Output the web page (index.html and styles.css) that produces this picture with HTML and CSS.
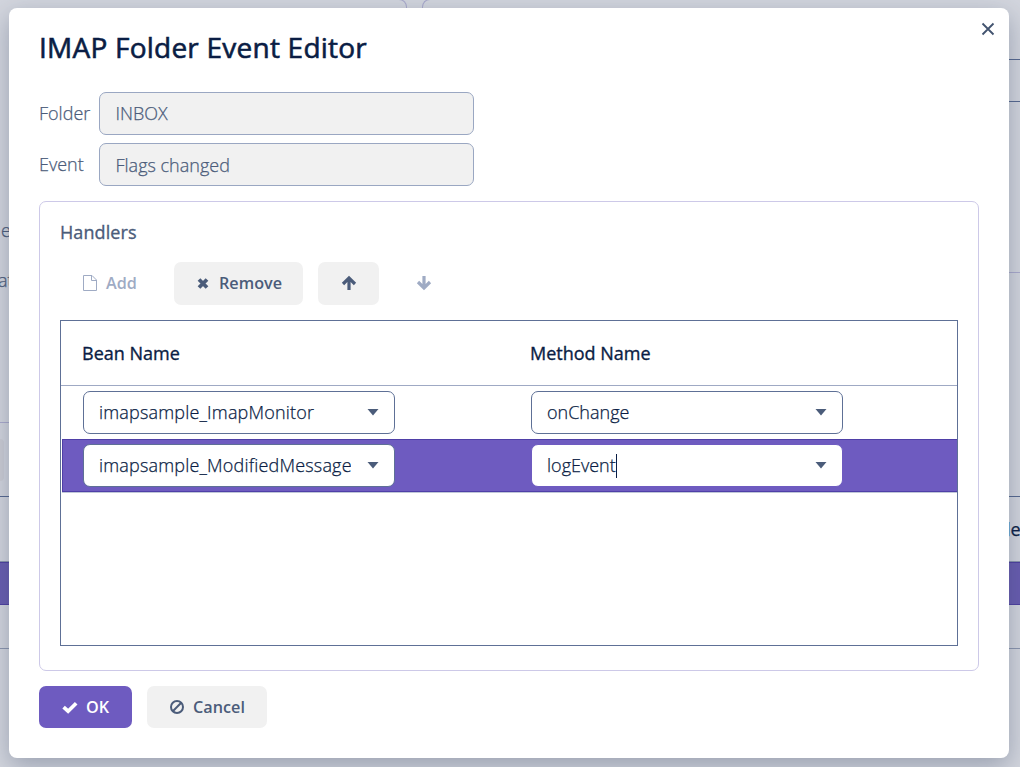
FILE: index.html
```html
<!DOCTYPE html>
<html lang="en">
<head>
<meta charset="utf-8">
<title>IMAP Folder Event Editor</title>
<link rel="stylesheet" href="styles.css">
</head>
<body>
<div class="page">
  <div class="page-top"><div class="pane pane-left"></div><div class="pane pane-right"></div></div>
  <div class="page-body">
    <div class="edge edge-left">
      <div class="edge-form"><span class="edge-label">e</span><span class="edge-label edge-label-wide">at</span></div>
      <div class="edge-tools"><div class="edge-button"></div></div>
      <div class="edge-head"></div>
      <div class="edge-selected"></div>
      <div class="edge-row"></div>
    </div>
    <div class="edge edge-right">
      <div class="edge-field"></div>
      <div class="edge-form-right"></div>
      <div class="edge-gap"></div>
      <div class="edge-head"><span>le</span></div>
      <div class="edge-selected"></div>
      <div class="edge-row"></div>
    </div>
  </div>
</div>
<div class="dialog" role="dialog" aria-label="IMAP Folder Event Editor">
  <button class="close" aria-label="Close"><svg width="14" height="14" viewBox="0 0 14 14"><path d="M1.5 1.5 12.5 12.5M12.5 1.5 1.5 12.5" fill="none" stroke="currentColor" stroke-width="1.8"/></svg></button>
  <h1 class="title">IMAP Folder Event Editor</h1>
  <div class="form">
    <span class="label">Folder</span><div class="field first">INBOX</div>
    <span class="label">Event</span><div class="field">Flags changed</div>
  </div>
  <section class="group">
    <h2 class="group-title">Handlers</h2>
    <div class="toolbar">
      <button class="btn add" disabled><svg width="16" height="16" viewBox="0 0 16 16"><path d="M1.5.5H10L14.5 5V15.5H1.5ZM9.5.5V5.5H14.5" fill="none" stroke="currentColor"/></svg><span>Add</span></button>
      <button class="btn remove"><svg width="16" height="16" viewBox="0 0 16 16"><path d="M4 4.5 12 12.5M12 4.5 4 12.5" fill="none" stroke="currentColor" stroke-width="3.8"/></svg><span>Remove</span></button>
      <button class="btn arrow" aria-label="Move up"><svg width="16" height="16" viewBox="0 0 16 16"><path d="M2 9 8 3 14 9M8 3.5V15" fill="none" stroke="currentColor" stroke-width="3.2"/></svg></button>
      <button class="btn arrow down" aria-label="Move down" disabled><svg width="16" height="16" viewBox="0 0 16 16"><path d="M2 7 8 13 14 7M8 12.5V1" fill="none" stroke="currentColor" stroke-width="3.2"/></svg></button>
    </div>
    <div class="table">
      <div class="row head"><span>Bean Name</span><span>Method Name</span></div>
      <div class="row">
        <div class="combo"><span class="value">imapsample_ImapMonitor</span><svg class="caret" width="12" height="7" viewBox="0 0 12 7"><path d="M.5 0H11.5L6 6.5Z"/></svg></div>
        <div class="combo"><span>onChange</span><svg class="caret" width="12" height="7" viewBox="0 0 12 7"><path d="M.5 0H11.5L6 6.5Z"/></svg></div>
      </div>
      <div class="row selected">
        <div class="combo"><span class="value">imapsample_ModifiedMessage</span><svg class="caret" width="12" height="7" viewBox="0 0 12 7"><path d="M.5 0H11.5L6 6.5Z"/></svg></div>
        <div class="combo focused"><span>logEvent</span><i class="cursor"></i><svg class="caret" width="12" height="7" viewBox="0 0 12 7"><path d="M.5 0H11.5L6 6.5Z"/></svg></div>
      </div>
    </div>
  </section>
  <div class="actions">
    <button class="btn ok"><svg width="16" height="16" viewBox="0 0 16 16"><path d="M1.6 8.1 6.1 12.2 14.2 4.2" fill="none" stroke="currentColor" stroke-width="3.7"/></svg><span>OK</span></button>
    <button class="btn cancel"><svg width="16" height="16" viewBox="0 0 16 16"><g fill="none" stroke="currentColor" stroke-width="2"><circle cx="8" cy="8" r="6"/><path d="M3.8 12.2 12.2 3.8"/></g></svg><span>Cancel</span></button>
  </div>
</div>
</body>
</html>
```
FILE: styles.css
```css
* { box-sizing: border-box; }
html, body { height: 100%; }
body {
  margin: 0;
  overflow: hidden;
  background: #d3d6de;
  color: #0a1d44;
  font: 300 18px/24px "Open Sans", sans-serif;
  -webkit-text-stroke: .25px currentColor;
}
.page { height: 767px; display: flex; flex-direction: column; overflow: hidden; }
.page-top { display: flex; gap: 15px; height: 8px; }
.pane { height: 20px; margin-top: -1px; border: 1px solid #aaaacc; }
.pane-left { width: 407px; border-radius: 0 8px 0 0; border-left: 0; }
.pane-right { flex: 1; border-radius: 8px 0 0 0; border-right: 0; }
.page-body { flex: 1; display: flex; justify-content: space-between; }
.edge { overflow: hidden; background: #d3d6de; }
.edge-left { width: 9px; }
.edge-right { width: 11px; }
.edge-form {
  height: 415px;
  padding-top: 210px;
  border-bottom: 1px solid #aaaacc;
  display: flex;
  flex-direction: column;
  gap: 26px;
  color: #4b5c7a;
}
.edge-label { margin-left: 1px; }
.edge-label-wide { margin-left: -2px; }
.edge-tools { height: 73px; padding-top: 16px; }
.edge-button { width: 4px; height: 42px; background: #cdced5; border-radius: 0 7px 7px 0; }
.edge-head {
  height: 66px;
  padding: 20px 0 0 1px;
  border-top: 1px solid #56688f;
  border-bottom: 1px solid #8c96ae;
  font-weight: 500;
}
.edge-head span { margin-left: -4px; }
.edge-selected { height: 43px; background: #685cb0; border: solid #4d3fa0; border-width: 1px 0; }
.edge-row { height: 44px; border-bottom: 1px solid #8c96ae; }
.edge-field { height: 43px; margin-top: 51px; border: solid #56688f; border-width: 1px 0; }
.edge-form-right { height: 171px; border-bottom: 1px solid #aaaacc; }
.edge-gap { height: 223px; }

.dialog {
  position: absolute;
  left: 9px;
  top: 8px;
  width: 1000px;
  height: 750px;
  padding: 21px 30px 30px;
  border-radius: 8px;
  background: #fff;
  box-shadow: 0 8px 26px rgba(50, 65, 95, .36);
}
.close {
  position: absolute;
  top: 14px;
  right: 14px;
  padding: 0;
  border: 0;
  background: none;
  color: #42536f;
  line-height: 0;
}
.title {
  margin: 0;
  font-size: 28px;
  line-height: 36px;
  font-weight: 500;
  letter-spacing: .23px;
  -webkit-text-stroke: .6px currentColor;
}
.form {
  margin-top: 27px;
  display: grid;
  grid-template-columns: 52px 375px;
  column-gap: 8px;
  row-gap: 8px;
  align-items: center;
  color: #4b5c7a;
}
.label { padding-bottom: 2px; }
.field { height: 43px; padding: 9px 15.5px; border: 1px solid #9aa7c2; border-radius: 7px; background: #f1f1f1; }
.first { padding-top: 8px; }
.group {
  height: 470px;
  margin-top: 15px;
  padding: 18px 20px 24px;
  border: 1px solid #cdc9e8;
  border-radius: 7px;
}
.group-title {
  margin: 0;
  color: #4b5c7a;
  font-size: 18px;
  line-height: 24px;
  font-weight: 500;
  letter-spacing: .1px;
  -webkit-text-stroke: .35px currentColor;
}
.toolbar { display: flex; gap: 15px; margin-top: 18px; }
.btn {
  display: flex;
  align-items: center;
  justify-content: center;
  gap: 8px;
  height: 43px;
  padding: 0;
  border: 0;
  border-radius: 7px;
  background: #f1f1f1;
  color: #4b5c7a;
  font: 600 16.2px/24px "Open Sans", sans-serif;
  -webkit-text-stroke: 0;
}
.toolbar .btn { padding: 0 0 1px; }
.btn:disabled { background: none; color: #9fabc4; }
.add { width: 99px; }
.remove { width: 129px; }
.arrow { width: 61px; }
.toolbar .down { padding-right: 2px; }
.table { height: 326px; margin-top: 15px; border: 1px solid #5e7096; }
.row {
  display: grid;
  grid-template-columns: 312px 312px;
  column-gap: 136px;
  align-items: center;
  height: 53px;
  padding-left: 22px;
}
.head {
  height: 65px;
  padding-left: 21px;
  border-bottom: 1px solid #9fa9c4;
  font-weight: 500;
  -webkit-text-stroke: .35px currentColor;
}
.selected {
  height: 53px;
  margin-left: 1px;
  padding-left: 20px;
  background: #6e5bc0;
  border: solid #4f3fa7;
  border-width: 1px 0 1px 1px;
  box-shadow: 0 1px #c0c7d8;
}
.combo {
  display: flex;
  align-items: center;
  height: 43px;
  padding: 0 15px;
  border: 1px solid #5e7096;
  border-radius: 7px;
  background: #fff;
}
.combo span { padding-bottom: 2px; }
.value { width: 252px; overflow: hidden; white-space: nowrap; letter-spacing: .18px; }
.focused { border-color: #6e5bc0; }
.caret { margin-left: auto; fill: #4b5c7a; }
.cursor { width: 1px; height: 24px; background: #0a1d44; }
.actions { display: flex; gap: 15px; margin-top: 15px; }
.actions .btn { height: 42px; }
.actions .ok { width: 93px; background: #6e5bc0; color: #fff; }
.actions .cancel { width: 120px; }
```
